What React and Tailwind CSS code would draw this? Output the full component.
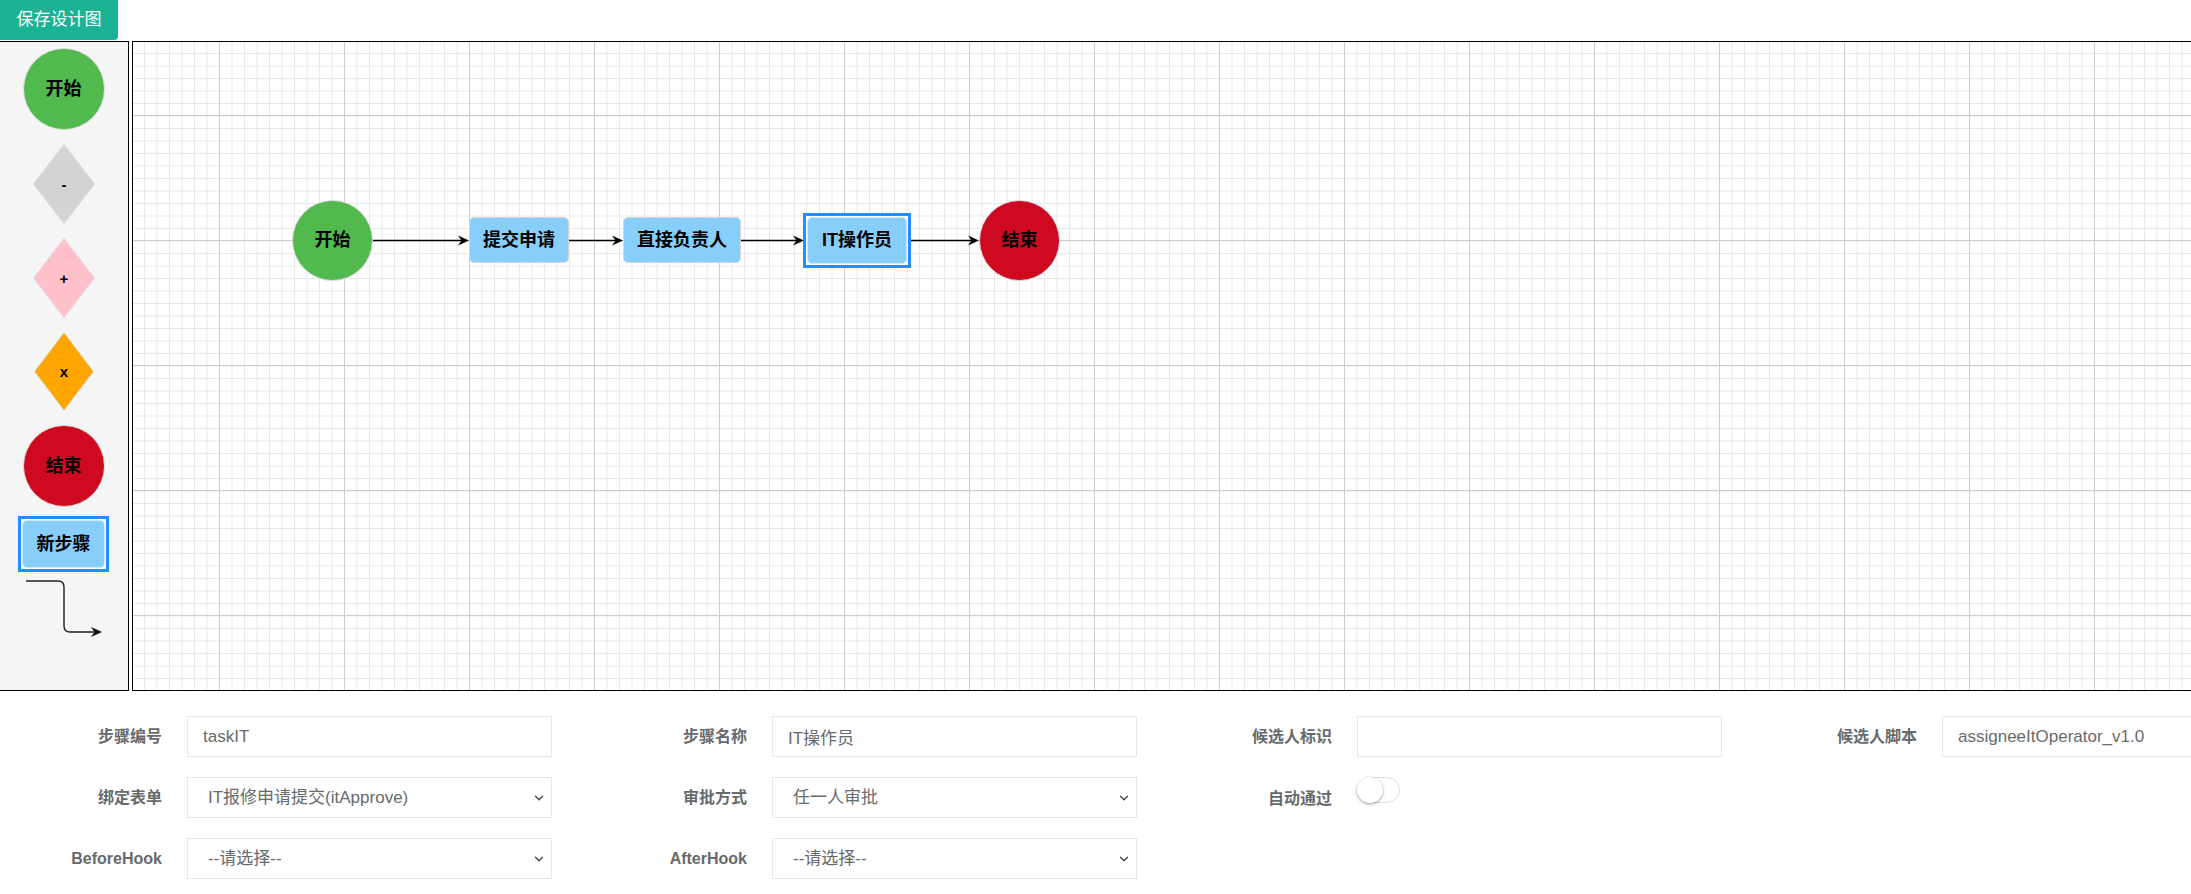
import React from 'react';
import { ChevronDown } from 'lucide-react';

const font = "font-['Liberation_Sans','Noto_Sans_CJK_SC',sans-serif]";

function Diamond({ fill, label, w = 62, h = 80 }) {
  return (
    <svg width={w} height={h} viewBox={`0 0 ${w} ${h}`} className="block">
      <polygon
        points={`${w / 2},0.5 ${w - 0.5},${h / 2} ${w / 2},${h - 0.5} 0.5,${h / 2}`}
        fill={fill}
        stroke="#dcdcdc"
        strokeWidth="1"
      />
      <text
        x={w / 2}
        y={h / 2}
        textAnchor="middle"
        dominantBaseline="central"
        fontSize="15"
        fontWeight="700"
        fontFamily="Liberation Sans, sans-serif"
        fill="#000"
      >
        {label}
      </text>
    </svg>
  );
}

function Field({ label, children }) {
  return (
    <div className="flex items-center w-[585px]">
      <label className="w-[162px] text-right text-[16px] font-bold text-[#676a6c] shrink-0">{label}</label>
      <div className="ml-[25px] w-[365px] shrink-0">{children}</div>
    </div>
  );
}

function TextInput({ value }) {
  return (
    <input
      defaultValue={value}
      className="w-full h-[41px] border border-[#e5e6e7] bg-white px-[15px] text-[17px] text-[#676a6c] outline-none"
    />
  );
}

function Select({ value }) {
  return (
    <div className="relative">
      <select
        defaultValue={value}
        className="w-full h-[41px] appearance-none border border-[#e5e6e7] bg-white pl-[20px] pr-[30px] text-[17px] text-[#676a6c] outline-none"
      >
        <option value={value}>{value}</option>
      </select>
      <ChevronDown size={14} strokeWidth={2.4} className="absolute right-[6px] top-[14px] text-[#444] pointer-events-none" />
    </div>
  );
}

function Arrow({ x1, x2, y }) {
  return (
    <g>
      <line x1={x1} y1={y} x2={x2 - 4} y2={y} stroke="#000" strokeWidth="1.3" />
      <polygon points={`${x2},${y} ${x2 - 11},${y - 5} ${x2 - 7.5},${y} ${x2 - 11},${y + 5}`} fill="#000" />
    </g>
  );
}

export default function App() {
  return (
    <div className={`w-[2191px] h-[894px] overflow-hidden bg-white ${font}`}>
      <button className="h-[40px] w-[118px] bg-[#1ab394] text-white text-[17px] rounded-br-[4px] flex items-center justify-center">
        保存设计图
      </button>

      <div className="flex mt-px h-[650px]">
        {/* palette */}
        <aside className="w-[129px] shrink-0 h-full bg-[#f5f5f5] border-t border-r border-b border-black flex flex-col items-center pt-[6px] pr-px">
          <div className="w-[82px] h-[82px] rounded-full bg-[#51b94e] border border-[#dedede] flex items-center justify-center text-[18px] font-bold text-black">
            开始
          </div>
          <div className="mt-[14px]"><Diamond fill="#d3d3d3" label="-" /></div>
          <div className="mt-[14px]"><Diamond fill="#ffc0cb" label="+" /></div>
          <div className="mt-[14px]"><Diamond fill="#ffa500" label="x" w={60} h={79} /></div>
          <div className="mt-[14px] w-[82px] h-[82px] rounded-full bg-[#cf0a20] border border-[#dedede] flex items-center justify-center text-[18px] font-bold text-black">
            结束
          </div>
          <div className="mt-[9px] w-[91px] h-[56px] border-[3px] border-[#1e90ff] bg-white p-px">
            <div className="h-full rounded-[5px] bg-[#87cefa] border border-[#d0e8f8] flex items-center justify-center text-[18px] font-bold text-black">
              新步骤
            </div>
          </div>
          <svg width="82" height="60" viewBox="0 0 82 60" className="mt-[6px] block">
            <path d="M3 3 H35 Q41 3 41 9 V48 Q41 54 47 54 H72" fill="none" stroke="#222" strokeWidth="1.4" />
            <polygon points="79,54 68,49 71.5,54 68,59" fill="#111" />
          </svg>
        </aside>

        {/* canvas */}
        <section className="relative ml-[3px] w-[2200px] shrink-0 h-full border border-black bg-white [background-image:linear-gradient(to_right,#cdcdcd_1px,transparent_1px),linear-gradient(to_bottom,#cdcdcd_1px,transparent_1px),linear-gradient(to_right,#e8e8e8_1px,transparent_1px),linear-gradient(to_bottom,#e8e8e8_1px,transparent_1px)] [background-size:125px_125px,125px_125px,12.5px_12.5px,12.5px_12.5px] [background-position:86px_0,0_73px,11px_0,0_11px]">
          <svg className="absolute inset-0 w-full h-full pointer-events-none">
            <Arrow x1={240} x2={336} y={198.5} />
            <Arrow x1={436} x2={490} y={198.5} />
            <Arrow x1={608} x2={671} y={198.5} />
            <Arrow x1={778} x2={846} y={198.5} />
          </svg>

          <div className="absolute left-[159px] top-[158px] w-[81px] h-[81px] rounded-full bg-[#51b94e] border border-[#dedede] flex items-center justify-center text-[18px] font-bold text-black">
            开始
          </div>
          <div className="absolute left-[336px] top-[175px] w-[100px] h-[46px] rounded-[5px] bg-[#87cefa] border border-[#d6d6d6] flex items-center justify-center text-[18px] font-bold text-black">
            提交申请
          </div>
          <div className="absolute left-[490px] top-[175px] w-[118px] h-[46px] rounded-[5px] bg-[#87cefa] border border-[#d6d6d6] flex items-center justify-center text-[18px] font-bold text-black">
            直接负责人
          </div>
          <div className="absolute left-[670px] top-[171px] w-[108px] h-[55px] border-[3px] border-[#1e90ff] bg-white p-px">
            <div className="h-full rounded-[5px] bg-[#87cefa] border border-[#d0e8f8] flex items-center justify-center text-[18px] font-bold text-black">
              IT操作员
            </div>
          </div>
          <div className="absolute left-[846px] top-[158px] w-[81px] h-[81px] rounded-full bg-[#cf0a20] border border-[#dedede] flex items-center justify-center text-[18px] font-bold text-black">
            结束
          </div>
        </section>
      </div>

      {/* properties form */}
      <div className="pt-[25px] w-[2340px] flex flex-col gap-y-[20px]">
        <div className="flex h-[41px]">
          <Field label="步骤编号"><TextInput value="taskIT" /></Field>
          <Field label="步骤名称"><TextInput value="IT操作员" /></Field>
          <Field label="候选人标识"><TextInput value="" /></Field>
          <Field label="候选人脚本"><TextInput value="assigneeItOperator_v1.0" /></Field>
        </div>
        <div className="flex h-[41px]">
          <Field label="绑定表单"><Select value="IT报修申请提交(itApprove)" /></Field>
          <Field label="审批方式"><Select value="任一人审批" /></Field>
          <div className="flex items-start w-[585px]">
            <label className="w-[162px] text-right text-[16px] font-bold text-[#676a6c] shrink-0 pt-[10px]">自动通过</label>
            <div className="ml-[25px] w-[43px] h-[26px] rounded-full border border-[#dfdfdf] bg-white flex items-center">
              <span className="-ml-px w-[26px] h-[26px] rounded-full bg-white shadow-[0_1px_3px_rgba(0,0,0,0.4)]" />
            </div>
          </div>
        </div>
        <div className="flex h-[41px]">
          <Field label="BeforeHook"><Select value="--请选择--" /></Field>
          <Field label="AfterHook"><Select value="--请选择--" /></Field>
        </div>
      </div>
    </div>
  );
}
